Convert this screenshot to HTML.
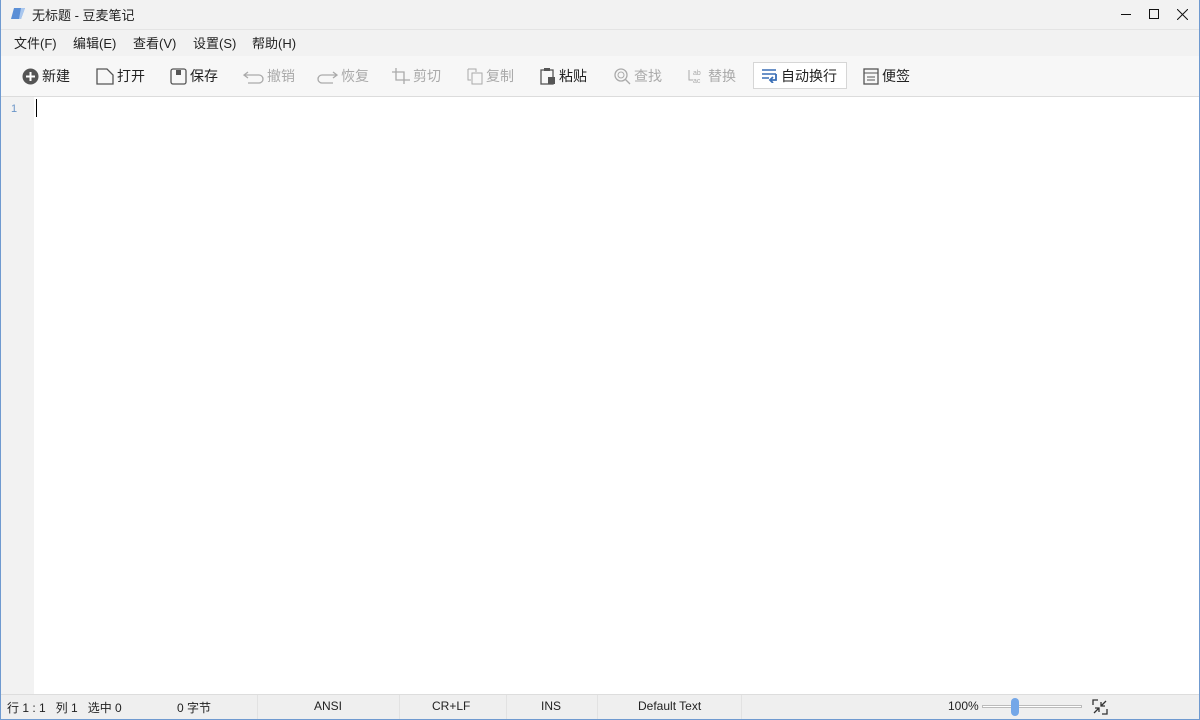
<!DOCTYPE html><html><head><meta charset="utf-8"><style>
*{margin:0;padding:0;box-sizing:border-box}
body{width:1200px;height:720px;overflow:hidden;background:#fff;font-family:"Liberation Sans","Noto Sans CJK SC",sans-serif;font-size:13px;color:#222;position:relative;border:1px solid #6f9ad0;border-top:none}
.t{position:absolute}
#title{top:0;left:0;width:1198px;height:29px;background:#f2f2f2;}
#menu{top:29px;left:0;width:1198px;height:27px;background:#f2f2f2;border-top:1px solid #e4e4e4}
#tool{top:56px;left:0;width:1198px;height:41px;background:#f7f7f7;border-bottom:1px solid #dcdcdc}
#gut{top:97px;left:0;width:33px;height:597px;background:#f2f2f2}
#stat{top:694px;left:0;width:1198px;height:25px;background:#efefef;border-top:1px solid #ddd;font-size:12px}
.b{position:absolute;top:10px;font-size:14px;display:flex;align-items:center;gap:3px}
.g{color:#aaa}
svg{display:block}
</style></head><body>
<div class="t" id="title">
<svg class="t" style="left:10px;top:6px" width="16" height="14"><path d="M3 2h11l-4 11H0z" fill="#5b8fd6"/><path d="M10 2h4l-4 11H8z" fill="#a9c7ee"/></svg>
<span class="t" style="left:31px;top:5px">无标题 - 豆麦笔记</span>
<span class="t" style="left:1120px;top:14px;width:10px;border-top:1px solid #111"></span>
<span class="t" style="left:1148px;top:9px;width:10px;height:10px;border:1px solid #111"></span>
<svg class="t" style="left:1176px;top:9px" width="11" height="11"><path d="M0 0L11 11M11 0L0 11" stroke="#111"/></svg>
</div>
<div class="t" id="menu">
<span class="t" style="left:13px;top:3px">文件(F)</span>
<span class="t" style="left:72px;top:3px">编辑(E)</span>
<span class="t" style="left:132px;top:3px">查看(V)</span>
<span class="t" style="left:192px;top:3px">设置(S)</span>
<span class="t" style="left:251px;top:3px">帮助(H)</span>
</div>
<div class="t" id="tool">
<div class="b" style="left:21px"><svg width="17" height="17"><circle cx="8.5" cy="8.5" r="8" fill="#555"/><path d="M8.5 4v9M4 8.5h9" stroke="#fff" stroke-width="2"/></svg>新建</div>
<div class="b" style="left:95px"><svg width="18" height="17"><path d="M1 1h10l6 6v9H1z" fill="none" stroke="#555" stroke-width="1.3"/></svg>打开</div>
<div class="b" style="left:169px"><svg width="17" height="17"><rect x="1" y="1" width="15" height="15" rx="2" fill="none" stroke="#555" stroke-width="1.3"/><rect x="6" y="2" width="5" height="5" fill="#555"/></svg>保存</div>
<div class="b g" style="left:242px"><svg width="21" height="15"><path d="M5 3L1 6l4 3M1 6h15a4 4 0 010 8H5" fill="none" stroke="#aaa" stroke-width="1.3"/></svg>撤销</div>
<div class="b g" style="left:316px"><svg width="21" height="15"><path d="M16 3l4 3-4 3M20 6H5a4 4 0 000 8h11" fill="none" stroke="#aaa" stroke-width="1.3"/></svg>恢复</div>
<div class="b g" style="left:391px"><svg width="18" height="16"><path d="M4 0v12h14M0 4h12v12" fill="none" stroke="#aaa" stroke-width="1.3"/></svg>剪切</div>
<div class="b g" style="left:466px"><svg width="16" height="17"><path d="M1 1h8v3M1 1v11h3" fill="none" stroke="#aaa"/><rect x="5" y="5" width="10" height="11" fill="none" stroke="#aaa"/></svg>复制</div>
<div class="b" style="left:539px"><svg width="16" height="17"><rect x="1" y="2" width="12" height="14" fill="none" stroke="#555" stroke-width="1.3"/><rect x="4" y="0" width="6" height="3" fill="#555"/><rect x="8" y="9" width="7" height="7" fill="#555"/></svg>粘贴</div>
<div class="b g" style="left:613px"><svg width="17" height="17"><circle cx="7" cy="7" r="6" fill="none" stroke="#aaa" stroke-width="1.3"/><circle cx="7" cy="7" r="3" fill="none" stroke="#aaa"/><path d="M11 11l5 5" stroke="#aaa" stroke-width="1.3"/></svg>查找</div>
<div class="b g" style="left:686px"><svg width="18" height="17"><text x="6" y="7" font-size="7" fill="#aaa">ab</text><text x="6" y="15" font-size="7" fill="#aaa">ac</text><path d="M2 2v10h4" fill="none" stroke="#aaa"/></svg>替换</div>
<div class="b" style="left:752px;top:6px;height:27px;padding:0 9px 0 7px;border:1px solid #d6d6d6;background:#fff"><svg width="17" height="15"><path d="M1 2h14M1 6h14M1 10h7" stroke="#3a6fb6" stroke-width="1.5"/><path d="M15 6v6h-5M12 9l-3 3 3 3" fill="none" stroke="#3a6fb6" stroke-width="1.8"/></svg>自动换行</div>
<div class="b" style="left:862px"><svg width="16" height="17"><rect x="1" y="1" width="14" height="15" fill="none" stroke="#555" stroke-width="1.3"/><path d="M1 5h14M4 9h8M4 12h8" stroke="#555"/></svg>便签</div>
</div>
<div class="t" id="gut"><span class="t" style="left:10px;top:6px;font-size:11px;color:#6a95c8">1</span></div>
<div class="t" style="left:35px;top:99px;width:1px;height:18px;background:#000"></div>
<div class="t" id="stat">
<span class="t" style="left:6px;top:4px">行 1 : 1&nbsp;&nbsp;&nbsp;列 1&nbsp;&nbsp;&nbsp;选中 0</span>
<span class="t" style="left:176px;top:4px">0 字节</span>
<span class="t" style="left:313px;top:4px">ANSI</span>
<span class="t" style="left:431px;top:4px">CR+LF</span>
<span class="t" style="left:540px;top:4px">INS</span>
<span class="t" style="left:637px;top:4px">Default Text</span>
<span class="t" style="left:256px;top:0;width:1px;height:24px;background:#e2e2e2"></span>
<span class="t" style="left:398px;top:0;width:1px;height:24px;background:#e2e2e2"></span>
<span class="t" style="left:505px;top:0;width:1px;height:24px;background:#e2e2e2"></span>
<span class="t" style="left:596px;top:0;width:1px;height:24px;background:#e2e2e2"></span>
<span class="t" style="left:740px;top:0;width:1px;height:24px;background:#e2e2e2"></span>
<span class="t" style="left:947px;top:4px">100%</span>
<span class="t" style="left:981px;top:10px;width:100px;height:3px;border:1px solid #bbb;background:#fff"></span>
<span class="t" style="left:1010px;top:3px;width:8px;height:18px;border-radius:4px;background:#74a7e8"></span>
<svg class="t" style="left:1091px;top:4px" width="16" height="16"><path d="M1 6V1h5M15 10v5h-5" fill="none" stroke="#333" stroke-width="1.3"/><path d="M14 2L9 7M9 3v4h4M2 14l5-5M3 9h4v4" fill="none" stroke="#333" stroke-width="1.3"/></svg>
</div>
</body></html>
